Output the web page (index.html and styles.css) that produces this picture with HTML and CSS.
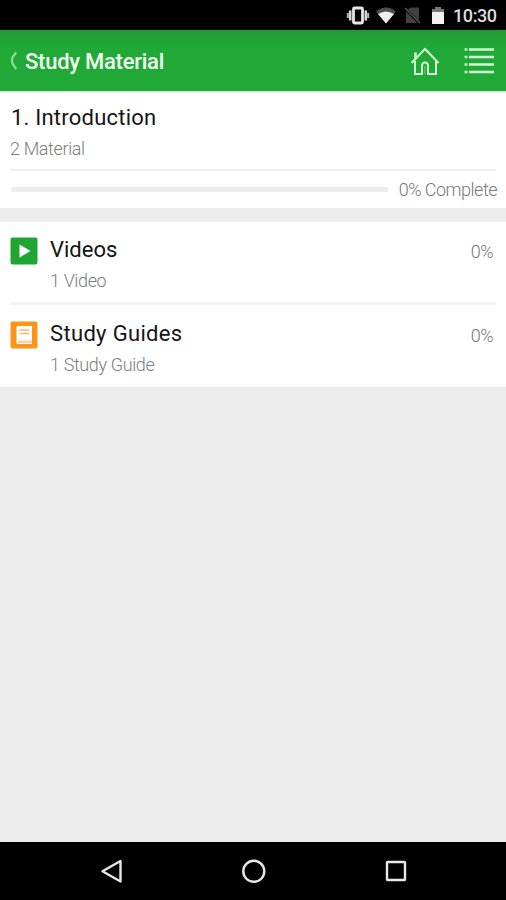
FILE: index.html
```html
<!DOCTYPE html>
<html lang="en">
<head>
<meta charset="utf-8">
<title>Study Material</title>
<link rel="stylesheet" href="styles.css">
</head>
<body>
<div class="screen">
  <div class="status">
    <svg class="status-icons" width="101" height="30" viewBox="0 0 101 30">
      <rect x="7.500" y="8" width="9" height="15" rx="1" fill="none" stroke="#e6e6e6" stroke-width="2.800"/>
      <path d="M4.200 10.500v10M19.800 10.500v10" stroke="#d8d8d8" stroke-width="2.600"/>
      <path d="M1.800 13v5M22.200 13v5" stroke="#b5b5b5" stroke-width="2"/>
      <path d="M30 11.500Q40 3.500 50 11.500L40 23.500Z" fill="#4d4d4d"/>
      <path d="M32 14Q40 9 48 14L40 23.500Z" fill="#eee"/>
      <path d="M60 11.500L64 7.500H73V23H60Z" fill="#414141"/>
      <path d="M58 7.500L74 23.500" stroke="#000" stroke-width="3"/>
      <path d="M59 8L74 23" stroke="#555" stroke-width="1.500"/>
      <path d="M89 7h6v2h3v3H86V9h3Z" fill="#777"/>
      <path d="M86 12h12v12H86Z" fill="#f2f2f2"/>
    </svg>
    <span class="clock">10:30</span>
  </div>
  <header class="bar">
    <svg class="back" width="8" height="20" viewBox="0 0 8 20"><path d="M6.200 1.500L3 5.500Q.8 9.500 3 13.500L6.200 18" fill="none" stroke="#94d89c" stroke-width="2.200"/></svg>
    <h1 class="title">Study Material</h1>
    <svg class="home" width="30" height="30" viewBox="0 0 30 30" fill="none" stroke="#d2fad5" stroke-width="2">
      <path d="M1.500 16L15 2L28.500 16"/>
      <path d="M5 14V27H12V19.500Q12 15.500 15 15.500T18 19.500V27H26V14"/>
      <path d="M5.500 11.500V5.500" stroke-width="2.500"/>
      <path d="M15 19V27" stroke-width="1" opacity=".5"/>
    </svg>
    <svg class="menu" width="31" height="28" viewBox="0 0 31 28">
      <path d="M5 2.500H30M5 10H30M5 17.500H30M5 25H30" stroke="#d2fad5" stroke-width="2.400"/>
      <path d="M.5 2.500H3.500M.5 10H3.500M.5 17.500H3.500M.5 25H3.500" stroke="#b5eeba" stroke-width="2.600"/>
    </svg>
  </header>
  <section class="summary">
    <h2 class="heading heading-intro">1. Introduction</h2>
    <p class="sub sub-intro">2 Material</p>
    <div class="progress">
      <div class="track"></div>
      <span class="complete">0% Complete</span>
    </div>
  </section>
  <section class="list">
    <article class="item">
      <svg class="icon" width="28" height="28" viewBox="0 0 28 28"><rect x=".5" y=".5" width="27" height="27" rx="2" fill="#20a534"/><path d="M9.500 7.500L20.500 14L9.500 20.500Z" fill="#fff"/></svg>
      <div class="body">
        <h2 class="heading heading-videos">Videos</h2>
        <p class="sub sub-videos">1 Video</p>
      </div>
      <span class="percent">0%</span>
    </article>
    <article class="item">
      <svg class="icon" width="28" height="28" viewBox="0 0 28 28"><rect x=".5" y=".5" width="27" height="27" rx="2" fill="#fb9517"/><path d="M8 5H22V23H8Q6.500 23 6.500 21.500V6.500Q6.500 5 8 5Z" fill="#fff"/><path d="M9.500 9H19M9.500 12.500H19" stroke="#fbb66a" stroke-width="1.600"/><path d="M8 19.500H22V22H8Z" fill="#fdd0a8"/></svg>
      <div class="body">
        <h2 class="heading heading-guides">Study Guides</h2>
        <p class="sub sub-guides">1 Study Guide</p>
      </div>
      <span class="percent">0%</span>
    </article>
  </section>
  <nav class="nav">
    <svg width="506" height="58" viewBox="0 0 506 58" fill="none" stroke="#e8e8e8" stroke-width="2.400">
      <path d="M120.500 19V39.500L102.500 29.300Z" stroke-linejoin="round"/>
      <circle cx="253.800" cy="29.300" r="10.500"/>
      <rect x="387" y="20" width="18" height="18" rx=".5"/>
    </svg>
  </nav>
</div>
</body>
</html>
```
FILE: styles.css
```css
* { box-sizing: border-box; }
body, h1, h2, p { margin: 0; }
body { font-family: Roboto, "Liberation Sans", sans-serif; background: #ededed; }
svg { display: block; flex: none; }
.screen { width: 506px; height: 900px; display: flex; flex-direction: column; background: #ededed; overflow: hidden; }
.status { height: 30px; flex: none; background: #000; display: flex; justify-content: flex-end; padding-right: 8px; }
.status-icons { margin-right: 6px; }
.clock { width: 45px; font-size: 18px; line-height: 32px; font-weight: 500; color: #dedede; white-space: nowrap; letter-spacing: -.4px; }
.bar { height: 62px; flex: none; display: flex; align-items: flex-start; padding: 0 11px 0 10px; background: linear-gradient(#239a35, #21a938 18px, #21a938); border-bottom: 1px solid #c4f3c9; }
.back { margin-top: 21px; }
.title { margin: 16px auto 0 7px; font-size: 22px; line-height: 32px; font-weight: 500; color: #f0fff0; white-space: nowrap; letter-spacing: -.25px; }
.home { margin: 17px 24px 0 0; }
.menu { margin-top: 17px; }
.summary { height: 116px; flex: none; background: #fff; padding: 11px 10px 0; }
.heading { font-size: 22px; line-height: 30px; font-weight: 400; color: #151515; white-space: nowrap; }
.heading-intro { padding-left: 1px; letter-spacing: .22px; }
.heading-guides { letter-spacing: .33px; }
.sub { font-size: 18px; line-height: 24px; font-weight: 300; color: #7d7d7d; white-space: nowrap; letter-spacing: -.37px; }
.sub-intro { margin-top: 4px; }
.progress { margin-top: 8px; border-top: 2px solid #eee; height: 39px; display: flex; align-items: center; justify-content: space-between; }
.track { width: 377px; height: 5px; margin-left: 1px; background: #ededed; border-radius: 2px 0 0 2px; }
.complete, .percent { font-size: 18px; line-height: 24px; font-weight: 300; color: #777; white-space: nowrap; letter-spacing: -.5px; }
.complete { margin-right: -1px; padding-top: 1px; }
.list { margin-top: 14px; height: 165px; flex: none; background: #fff; padding-left: 10px; padding-right: 10px; }
.item { height: 84px; display: flex; }
.item:first-child { height: 83px; border-bottom: 3px solid #f3f3f3; }
.item + .item { padding-top: 1px; }
.icon { margin-top: 15px; }
.body { flex: 1; padding: 13px 0 0 12px; }
.body .sub { margin-top: 4px; }
.percent { margin: 18px 3px 0 0; }
.nav { margin-top: auto; height: 58px; flex: none; background: #000; }
```
